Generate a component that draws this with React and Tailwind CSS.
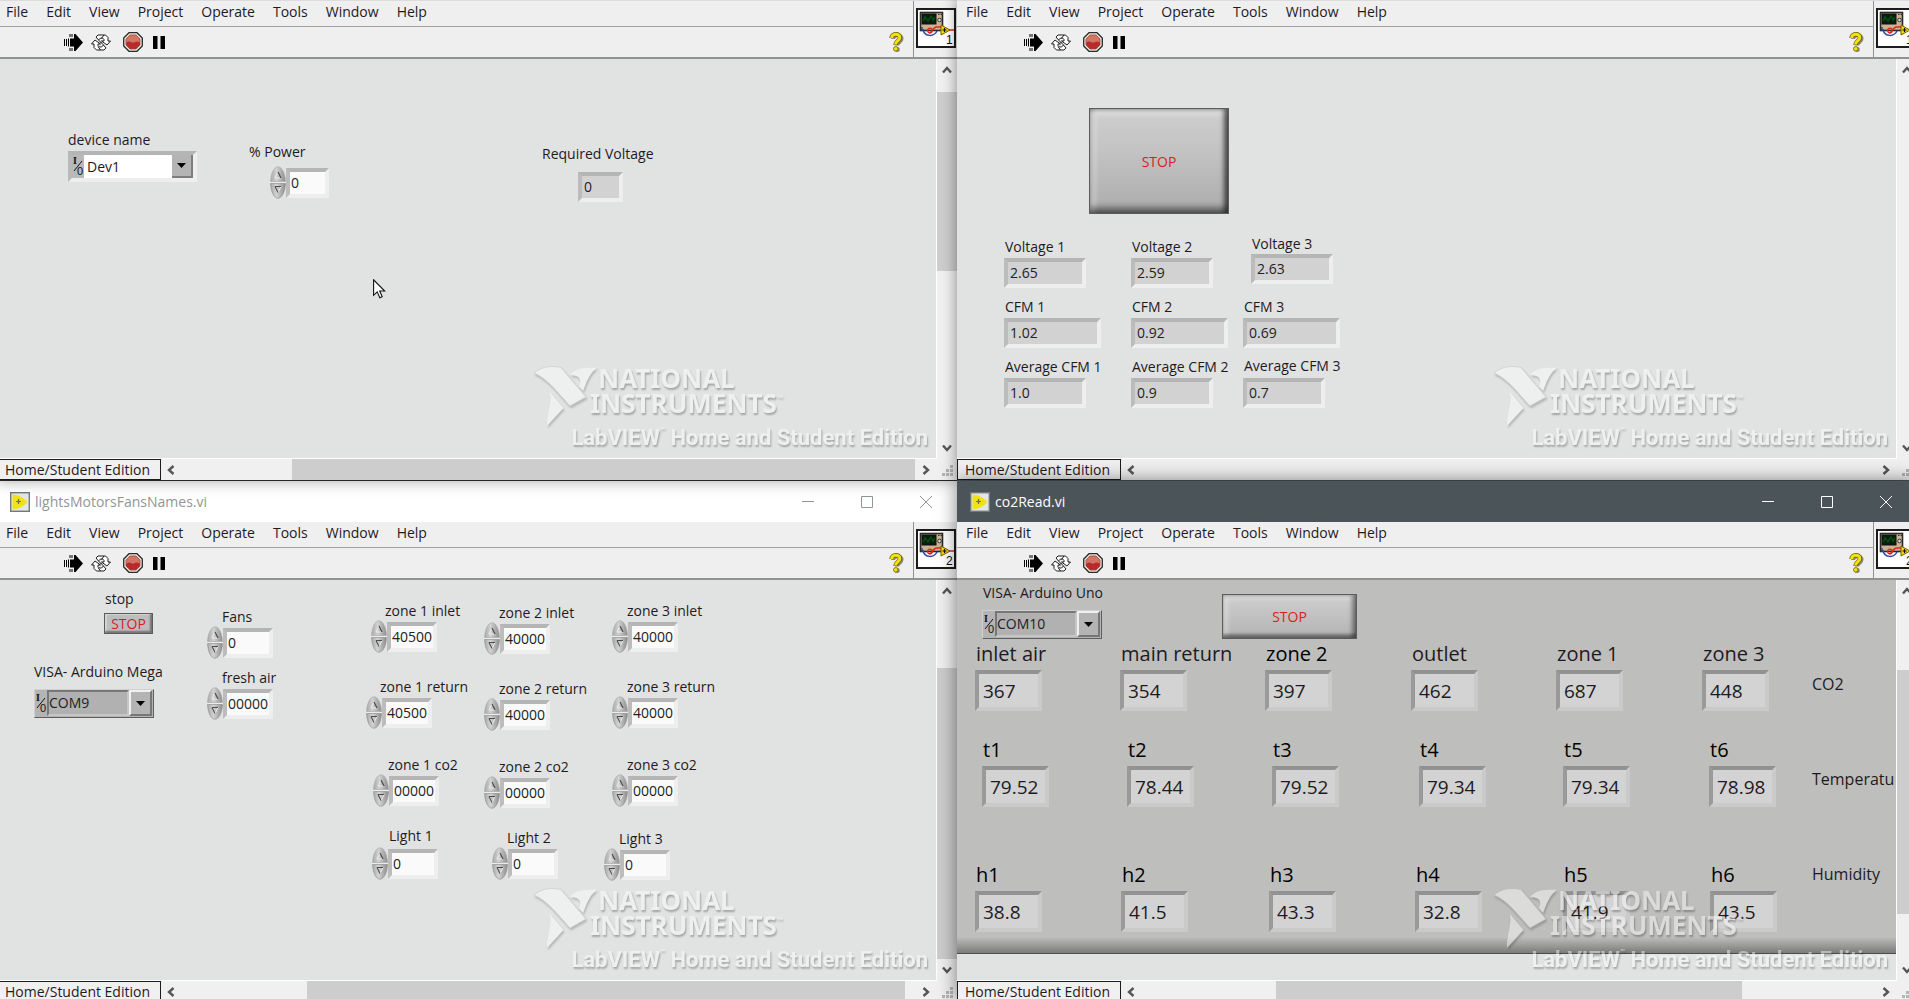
import { useId } from "react";

const MENUS = ["File", "Edit", "View", "Project", "Operate", "Tools", "Window", "Help"];

function RunIcon() {
  return (
    <svg width="19" height="17" viewBox="0 0 19 17" fill="#000">
      <path d="M0 5h1v7H0zM2 5h1v7H2zM4 4.500h1v8H4zM5.500 0h1v3h-1zM7.500 0h1v3h-1zM5.500 14h1v3h-1zM7.500 14h1v3h-1zM6 4.500h4V0h1.500L19 8.500 11.500 17H10v-4.500H6z" />
    </svg>
  );
}

function LoopIcon() {
  return (
    <svg width="20" height="17" viewBox="0 0 20 17" fill="#fff" stroke="#1c1c1c" strokeLinejoin="round">
      <path d="M5 3 7 1h7.500L17 3.500V7h2.500L16 11 10.500 7H13V5.500L11.500 4H9.500L7.500 6z" />
      <path d="M15 14 13 16H5.500L3 13.500V10H.5L4 6l5.500 4H7v1.500L8.500 13h2l2-2z" />
      <path d="M10.500 4.500 13 1M7 12.500 9.500 16M7.500 6l3 3M9.500 8l3 3" fill="none" />
    </svg>
  );
}

function AbortIcon() {
  return (
    <svg width="20" height="20" viewBox="0 0 20 20">
      <path d="M6 .7h8L19.300 6v8L14 19.300H6L.7 14V6z" fill="#e9e4dc" stroke="#2b2b2b" strokeWidth="1.300" />
      <path d="M7 3h6l4 4v3.500H3V7z" fill="#d27563" />
      <path d="M3 10.500 6 9.500l4 1 4-1 3 1V13l-4 4H7l-4-4z" fill="#b92a2a" />
      <path d="M7 3h6l4 4v6l-4 4H7l-4-4V7z" fill="none" stroke="#a5453c" strokeWidth=".8" />
    </svg>
  );
}

function PauseIcon() {
  return (
    <svg width="12" height="13" viewBox="0 0 12 13" fill="#000">
      <path d="M0 0h4.500v13H0zM7.500 0H12v13H7.500z" />
    </svg>
  );
}

function HelpIcon() {
  return (
    <svg width="15" height="20" viewBox="0 0 15 20" fill="none">
      <path d="M3.500 6.500C3.500 1.500 12 1.500 12 6c0 3.500-4.500 3.500-4.500 7" stroke="#8a8a80" strokeWidth="4" transform="translate(.6 .6)" />
      <circle cx="8.200" cy="17.400" r="2.500" fill="#8a8a80" />
      <path d="M2.500 6C2.500 1 11 1 11 5.500c0 3.500-4.500 3.500-4.500 7.500" stroke="#6b6200" strokeWidth="4.400" />
      <path d="M2.700 6C2.700 1.200 10.800 1.200 10.800 5.500c0 3.300-4.300 3.500-4.300 7" stroke="#f3e10d" strokeWidth="3" />
      <circle cx="6.800" cy="16.800" r="2.300" fill="#f3e10d" stroke="#6b6200" strokeWidth=".8" />
    </svg>
  );
}

function ViIcon({ index }) {
  return (
    <svg width="40" height="40" viewBox="0 0 40 40">
      <rect x="1" y="1" width="38" height="38" fill="#fff" stroke="#1c1c1c" strokeWidth="2" />
      <rect x="4.500" y="4.500" width="22" height="18" fill="#cbb491" stroke="#2a2a2a" strokeWidth="1.600" />
      <rect x="6" y="6" width="14" height="10" fill="#06200a" stroke="#111" />
      <path d="M7 13l2-4 3 4 3-5 2 4 2-3" stroke="#0d4a1c" strokeWidth="1.500" fill="none" />
      <path d="M22 6.500h1.500M24.500 6.500H26" stroke="#333" />
      <circle cx="23.500" cy="12" r="1.800" fill="#ddd" stroke="#333" />
      <path d="M6 19v3h2" stroke="#27408f" fill="none" strokeWidth="1.400" />
      <path d="M7 22c2 7 11 7 14 1" stroke="#2b4ba8" fill="none" strokeWidth="1.500" />
      <path d="M13 25c4 0 3-5 7-6h5" stroke="#e32619" fill="none" strokeWidth="1.500" />
      <circle cx="14" cy="22.500" r="2.300" fill="none" stroke="#e32619" strokeWidth="1.300" />
      <path d="M33 22h5" stroke="#e32619" strokeWidth="1.500" />
      <path d="M25 17v10l9-5z" fill="#f5d90f" stroke="#7a5c00" />
      <path d="M26.500 22h4M28.500 20v4" stroke="#111" strokeWidth="1.200" />
      <text x="30" y="36" fontSize="12" fontFamily="Liberation Sans, sans-serif" fill="#111">{index}</text>
    </svg>
  );
}

function FileIcon() {
  return (
    <svg width="20" height="20" viewBox="0 0 20 20">
      <rect x=".7" y=".7" width="18.600" height="18.600" fill="#e4e6e6" stroke="#6f7a80" strokeWidth="1.400" />
      <path d="M2.500 2.500C9 3 14 6 17.500 10 14 14 9 17 2.500 17.500z" fill="#f0e216" />
      <path d="M6 9.500h5M8.500 7v5" stroke="#6f6a4a" strokeWidth="1.200" />
    </svg>
  );
}

function Chevron({ d }) {
  return (
    <svg width="10" height="10" viewBox="0 0 10 10" fill="none" stroke="#555" strokeWidth="2.400">
      <path d={d} />
    </svg>
  );
}

const UP = "M1 7.500l4-4.500 4 4.500";
const DOWN = "M1 2.500l4 4.500 4-4.500";
const LEFT = "M7.500 1L3 5l4.500 4";
const RIGHT = "M2.500 1L7 5 2.500 9";

function Grip() {
  return (
    <svg width="11" height="11" viewBox="0 0 11 11" fill="#b5b5b5">
      <path d="M8 0h3v3H8zM4 4h3v3H4zM8 4h3v3H8zM0 8h3v3H0zM4 8h3v3H4zM8 8h3v3H8z" />
    </svg>
  );
}

function Watermark() {
  return (
    <div className="pointer-events-none absolute right-2 bottom-1.5 flex w-[394px] flex-col text-white opacity-45 select-none">
      <div className="flex">
        <svg width="66" height="64" viewBox="0 0 66 64" className="shrink-0 drop-shadow-[1px_2px_1px_rgba(0,0,0,0.45)]">
          <g fill="#fff">
            <path d="M36 9C43 1 51 2 63 1.500 54 9 52 18 49 25l-4-5C48 14 46 9 36 9z" />
            <path d="M16 26 29.500 42 13 60C12 49 18 39 16 26z" />
            <path d="M0 7C8 0 18-.5 27 1.500L52 31 36 40C24 27 14 13 0 7z" stroke="#b4b4b4" strokeWidth=".8" />
          </g>
        </svg>
        <div className="-ml-2.5 flex flex-col font-['Noto_Sans'] text-[26px] leading-[25px] font-bold [text-shadow:1px_2px_2px_rgba(0,0,0,0.6)]">
          <span className="pl-2">NATIONAL</span>
          <span>INSTRUMENTS<sup className="relative -top-3 align-baseline text-[8px] leading-none">™</sup></span>
        </div>
      </div>
      <div className="-mt-1.5 flex justify-end font-['Roboto'] text-[22px] leading-[28px] font-bold whitespace-nowrap [text-shadow:1px_2px_2px_rgba(0,0,0,0.6)]">
        <span>LabVIEW<sup className="relative -top-3 align-baseline text-[8px] leading-none">™</sup> Home and Student Edition</span>
      </div>
    </div>
  );
}

function TitleBar({ name, active }) {
  return (
    <header className={active ? "flex h-[41px] shrink-0 items-center bg-[#4b5459] pl-[13px] text-white" : "flex h-[41px] shrink-0 items-center bg-white pl-[13px] text-[#8f9696]"}>
      <FileIcon />
      <h1 className="ml-[5px] flex-1 text-[14px] leading-5">{name}</h1>
      <div className="mr-0.5 flex">
        <button aria-label="Minimize" className="flex h-10 w-[59px] items-center justify-center">
          <svg width="12" height="12" viewBox="0 0 12 12" stroke="currentColor"><path d="M0 5.500h12" /></svg>
        </button>
        <button aria-label="Maximize" className="flex h-10 w-[59px] items-center justify-center">
          <svg width="12" height="12" viewBox="0 0 12 12" stroke="currentColor" fill="none"><path d="M.5.5h11v11H.5z" /></svg>
        </button>
        <button aria-label="Close" className="flex h-10 w-[59px] items-center justify-center">
          <svg width="12" height="12" viewBox="0 0 12 12" stroke="currentColor" fill="none"><path d="M0 0l12 12M12 0L0 12" /></svg>
        </button>
      </div>
    </header>
  );
}

function Bars({ index }) {
  return (
    <div className="flex shrink-0 border-b-2 border-[#919191] bg-[#efefef]">
      <div className="flex min-w-0 flex-1 flex-col">
        <nav className="flex h-[26px] items-center gap-[18px] border-b border-[#a3a3a3] pb-[3px] pl-[9px]">
          {MENUS.map((m) => (
            <button key={m} className="leading-5">{m}</button>
          ))}
        </nav>
        <div className="flex h-[30px] items-center pr-[9px] pl-[67px]">
          <button aria-label="Run"><RunIcon /></button>
          <button aria-label="Run continuously" className="ml-2"><LoopIcon /></button>
          <button aria-label="Abort execution" className="ml-3"><AbortIcon /></button>
          <button aria-label="Pause" className="ml-2.5"><PauseIcon /></button>
          <button aria-label="Show context help" className="ml-auto"><HelpIcon /></button>
        </div>
      </div>
      <div className="flex w-11 justify-end border-l border-[#919191] pt-[7px] pr-px">
        <ViIcon index={index} />
      </div>
    </div>
  );
}

function VScroll({ thumb }) {
  return (
    <div className="flex w-5 shrink-0 flex-col items-center bg-[#f0f0f0]">
      <button aria-label="Scroll up" className="flex h-[22px] w-full items-center justify-center"><Chevron d={UP} /></button>
      <div className="w-full flex-1">
        {thumb && <div className={thumb} />}
      </div>
      <button aria-label="Scroll down" className="flex h-[22px] w-full items-center justify-center"><Chevron d={DOWN} /></button>
    </div>
  );
}

function StatusBar({ thumb }) {
  return (
    <footer className="flex h-[21px] shrink-0 bg-[#f0f0f0]">
      <div className="flex w-[164px] items-center border border-[#1c1c1c] pl-[7px] leading-[18px]">Home/Student Edition</div>
      <button aria-label="Scroll left" className="flex w-5 items-center justify-center"><Chevron d={LEFT} /></button>
      <div className="flex-1">
        {thumb && <div className={thumb} />}
      </div>
      <button aria-label="Scroll right" className="flex w-[22px] items-center justify-center"><Chevron d={RIGHT} /></button>
      <div className="flex w-5 items-end justify-center pb-1"><Grip /></div>
    </footer>
  );
}

function ViWindow({ title, active, index, hThumb, vThumb, className, children }) {
  return (
    <section className={className}>
      {title && <TitleBar name={title} active={active} />}
      <Bars index={index} />
      <div className="flex min-h-0 flex-1">
        <main className="relative min-w-0 flex-1 overflow-hidden border-r border-b border-white bg-[#e1e3e2]">
          {children}
          <Watermark />
        </main>
        <VScroll thumb={vThumb} />
      </div>
      <StatusBar thumb={hThumb} />
    </section>
  );
}

function Spinner() {
  const id = useId();
  return (
    <svg width="16" height="33" viewBox="0 0 16 33" className="shrink-0">
      <defs>
        <linearGradient id={id} x1="0" x2="1">
          <stop offset="0" stopColor="#a8a8a8" />
          <stop offset=".4" stopColor="#d2d2d2" />
          <stop offset="1" stopColor="#8d8d8d" />
        </linearGradient>
      </defs>
      <path d="M.5 15.500C1 7 4 .8 8 .8S15 7 15.500 15.500z" fill={`url(#${id})`} stroke="#a8a8a8" strokeWidth=".6" />
      <path d="M.5 17.500C1 26 4 32.200 8 32.200S15 26 15.500 17.500z" fill={`url(#${id})`} stroke="#8a8a8a" strokeWidth=".6" />
      <path d="M0 16.500h16" stroke="#ececec" />
      <path d="M5 12 8 6M5 12h6" fill="none" stroke="#ececec" />
      <path d="M11 12 8 6" stroke="#4c4c4c" strokeWidth="1.300" />
      <path d="M11 20.500 8 26.500" stroke="#ececec" />
      <path d="M5 20.500h6M5 20.500 8 26.500" stroke="#4c4c4c" strokeWidth="1.100" />
    </svg>
  );
}

function Numeric({ label, value, labelAt, at, size = "w-[50px]" }) {
  const id = useId();
  return (
    <>
      <label htmlFor={id} className={`absolute leading-5 whitespace-nowrap ${labelAt}`}>{label}</label>
      <div className={`absolute flex items-center ${at}`}>
        <Spinner />
        <input id={id} defaultValue={value} className={`h-[30px] border-4 border-t-[#b5b5b5] border-r-[#eeeeee] border-b-[#eeeeee] border-l-[#bcbcbc] bg-[#fafafa] pl-px text-[#222] outline-none ${size}`} />
      </div>
    </>
  );
}

function Indicator({ label, value, labelAt, at, size = "w-[82px]" }) {
  const id = useId();
  return (
    <>
      <label htmlFor={id} className={`absolute leading-5 whitespace-nowrap ${labelAt}`}>{label}</label>
      <output id={id} className={`absolute flex h-[30px] items-center border-4 border-t-[#b5b5b5] border-r-[#eeeeee] border-b-[#eeeeee] border-l-[#bcbcbc] bg-[#d2d2d2] pl-0.5 leading-5 text-[#222] ${at} ${size}`}>{value}</output>
    </>
  );
}

function Reading({ label, value, labelAt, at }) {
  const id = useId();
  return (
    <>
      <label htmlFor={id} className={`absolute text-[20px] leading-7 whitespace-nowrap ${labelAt}`}>{label}</label>
      <output id={id} className={`absolute flex h-[41px] w-[67px] items-center border-4 border-t-[#929292] border-r-[#cacaca] border-b-[#cacaca] border-l-[#9a9a9a] bg-[#d3d3d3] pl-1 text-[19px] leading-7 ${at}`}>{value}</output>
    </>
  );
}

function IoGlyph() {
  return (
    <svg width="12" height="22" viewBox="0 0 12 22" className="shrink-0">
      <text x="1" y="9" fontSize="10" fontFamily="Liberation Serif, serif" fontWeight="bold" fill="#111">I</text>
      <path d="M2 16 10 6" stroke="#111" />
      <text x="5" y="20" fontSize="11" fontFamily="Liberation Sans, sans-serif" fill="#111">0</text>
    </svg>
  );
}

function DownTriangle() {
  return (
    <svg width="9" height="5" viewBox="0 0 9 5"><path d="M0 0h9L4.500 5z" fill="#000" /></svg>
  );
}

function ModernRing({ label, value, labelAt, at }) {
  const id = useId();
  return (
    <>
      <label htmlFor={id} className={`absolute leading-5 whitespace-nowrap ${labelAt}`}>{label}</label>
      <div className={`absolute flex h-[31px] w-[129px] border-4 border-t-[#b5b5b5] border-r-[#eeeeee] border-b-[#eeeeee] border-l-[#b9b9b9] bg-[#b9b9b9] ${at}`}>
        <IoGlyph />
        <select id={id} className="min-w-0 flex-1 appearance-none bg-white pl-[3px] leading-5 outline-none">
          <option>{value}</option>
        </select>
        <span className="flex w-[21px] items-center justify-center border-r-2 border-b-2 border-[#7d7d7d] bg-[#b4b4b4]"><DownTriangle /></span>
      </div>
    </>
  );
}

function ClassicRing({ label, value, labelAt, at }) {
  const id = useId();
  return (
    <>
      <label htmlFor={id} className={`absolute leading-5 whitespace-nowrap ${labelAt}`}>{label}</label>
      <div className={`absolute flex h-[29px] w-[120px] border border-t-[#d0d0d0] border-r-[#5e5e5e] border-b-[#5e5e5e] border-l-[#d0d0d0] bg-[#b4b4b4] pr-px pb-px ${at}`}>
        <span className="flex items-center"><IoGlyph /></span>
        <select id={id} className="min-w-0 flex-1 appearance-none border-2 border-t-[#777] border-r-[#c6c6c6] border-b-[#c6c6c6] border-l-[#777] bg-[#b1b1b1] leading-5 text-[#222] outline-none">
          <option>{value}</option>
        </select>
        <span className="flex w-[23px] items-center justify-center border-2 border-t-[#f0f0f0] border-r-[#777] border-b-[#777] border-l-[#f0f0f0] bg-[#b4b4b4]"><DownTriangle /></span>
      </div>
    </>
  );
}

function Pointer() {
  return (
    <svg width="13" height="20" viewBox="0 0 13 20" className="absolute top-[220px] left-[376px]">
      <path d="M.6.800v15.500l3.600-3.400 2.600 5.900 2.400-1L6.700 12h5z" fill="#fff" stroke="#111" strokeWidth="1.100" />
    </svg>
  );
}

export default function App() {
  return (
    <div className="h-screen w-full overflow-hidden bg-[#efefef] font-['Open_Sans','Noto_Sans',sans-serif] text-[14px] text-[#1f1a1f]">
      <div className="-mr-2 -ml-[3px] grid h-[calc(100%+3px)] grid-cols-2 grid-rows-[481fr_521fr]">
        <ViWindow
          index={1}
          className="relative z-10 flex min-h-0 min-w-0 flex-col border-t border-b border-t-[#dcdcdc] border-b-[#2c2528] bg-[#efefef] shadow-[0_0_14px_rgba(0,0,0,0.35)]"
          vThumb="mt-[11px] h-[179px] bg-[#cdcdcd]"
          hThumb="ml-[111px] h-full bg-[#cdcdcd]"
        >
          <ModernRing label="device name" value="Dev1" labelAt="left-[71px] top-[71px]" at="left-[71px] top-[92px]" />
          <Numeric label="% Power" value="0" labelAt="left-[252px] top-[83px]" at="left-[273px] top-[107px]" size="w-[43px]" />
          <Indicator label="Required Voltage" value="0" labelAt="left-[545px] top-[85px]" at="left-[581px] top-[113px]" size="w-[45px]" />
          <Pointer />
        </ViWindow>

        <ViWindow
          index={1}
          className="relative z-20 flex min-h-0 min-w-0 flex-col border-t border-b border-t-[#dcdcdc] border-b-[#4b5459] bg-[#efefef] shadow-[0_0_14px_rgba(0,0,0,0.45)]"
        >
          <button className="absolute top-[49px] left-[132px] h-[106px] w-[140px] border border-[#5c5c5c] bg-linear-to-b from-[#cfcfcf] via-[#c3c3c3] via-40% to-[#acacac] text-[#e01a1a] shadow-[inset_-4px_0_5px_rgba(0,0,0,0.55),inset_0_-6px_6px_rgba(0,0,0,0.4),inset_6px_6px_4px_rgba(255,255,255,0.35)]">STOP</button>
          <Indicator label="Voltage 1" value="2.65" labelAt="left-[48px] top-[178px]" at="left-[47px] top-[199px]" />
          <Indicator label="Voltage 2" value="2.59" labelAt="left-[175px] top-[178px]" at="left-[174px] top-[199px]" />
          <Indicator label="Voltage 3" value="2.63" labelAt="left-[295px] top-[175px]" at="left-[294px] top-[195px]" />
          <Indicator label="CFM 1" value="1.02" labelAt="left-[48px] top-[238px]" at="left-[47px] top-[259px]" size="w-[97px]" />
          <Indicator label="CFM 2" value="0.92" labelAt="left-[175px] top-[238px]" at="left-[174px] top-[259px]" size="w-[97px]" />
          <Indicator label="CFM 3" value="0.69" labelAt="left-[287px] top-[238px]" at="left-[286px] top-[259px]" size="w-[97px]" />
          <Indicator label="Average CFM 1" value="1.0" labelAt="left-[48px] top-[298px]" at="left-[47px] top-[319px]" />
          <Indicator label="Average CFM 2" value="0.9" labelAt="left-[175px] top-[298px]" at="left-[174px] top-[319px]" />
          <Indicator label="Average CFM 3" value="0.7" labelAt="left-[287px] top-[297px]" at="left-[286px] top-[319px]" />
        </ViWindow>

        <ViWindow
          title="lightsMotorsFansNames.vi"
          index={2}
          className="relative flex min-h-0 min-w-0 flex-col bg-[#efefef]"
          vThumb="mt-[66px] h-[291px] bg-[#cdcdcd]"
          hThumb="mr-[10px] ml-[126px] h-full bg-[#cdcdcd]"
        >
          <label htmlFor="stop-fans" className="absolute top-[9px] left-[108px] leading-5">stop</label>
          <button id="stop-fans" className="absolute top-[33px] left-[107px] h-[21px] w-[49px] border border-[#5c5c5c] bg-[#bdbdbd] leading-[18px] text-[#e01a1a] shadow-[inset_-2px_-2px_2px_rgba(0,0,0,0.4),inset_2px_1px_1px_rgba(255,255,255,0.35)]">STOP</button>
          <ClassicRing label="VISA- Arduino Mega" value="COM9" labelAt="left-[37px] top-[82px]" at="left-[37px] top-[109px]" />
          <Numeric label="Fans" value="0" labelAt="left-[225px] top-[27px]" at="left-[210px] top-[46px]" />
          <Numeric label="fresh air" value="00000" labelAt="left-[225px] top-[88px]" at="left-[210px] top-[107px]" />
          <Numeric label="zone 1 inlet" value="40500" labelAt="left-[388px] top-[21px]" at="left-[374px] top-[40px]" />
          <Numeric label="zone 2 inlet" value="40000" labelAt="left-[502px] top-[23px]" at="left-[487px] top-[42px]" />
          <Numeric label="zone 3 inlet" value="40000" labelAt="left-[630px] top-[21px]" at="left-[615px] top-[40px]" />
          <Numeric label="zone 1 return" value="40500" labelAt="left-[383px] top-[97px]" at="left-[369px] top-[116px]" />
          <Numeric label="zone 2 return" value="40000" labelAt="left-[502px] top-[99px]" at="left-[487px] top-[118px]" />
          <Numeric label="zone 3 return" value="40000" labelAt="left-[630px] top-[97px]" at="left-[615px] top-[116px]" />
          <Numeric label="zone 1 co2" value="00000" labelAt="left-[391px] top-[175px]" at="left-[376px] top-[194px]" />
          <Numeric label="zone 2 co2" value="00000" labelAt="left-[502px] top-[177px]" at="left-[487px] top-[196px]" />
          <Numeric label="zone 3 co2" value="00000" labelAt="left-[630px] top-[175px]" at="left-[615px] top-[194px]" />
          <Numeric label="Light 1" value="0" labelAt="left-[392px] top-[246px]" at="left-[375px] top-[267px]" />
          <Numeric label="Light 2" value="0" labelAt="left-[510px] top-[248px]" at="left-[495px] top-[267px]" />
          <Numeric label="Light 3" value="0" labelAt="left-[622px] top-[249px]" at="left-[607px] top-[268px]" />
        </ViWindow>

        <ViWindow
          title="co2Read.vi"
          active
          index={2}
          className="relative z-30 flex min-h-0 min-w-0 flex-col bg-[#efefef] shadow-[0_0_18px_rgba(0,0,0,0.5)]"
          vThumb="mt-[68px] h-[244px] bg-[#cdcdcd]"
          hThumb="mr-[133px] ml-[135px] h-full bg-[#cdcdcd]"
        >
          <div className="flex h-[374px] flex-col justify-end border-b border-[#4c4c4c] bg-[#bebebc]">
            <div className="h-4 bg-linear-to-b from-[#bebebc] to-[#7c7c7c]" />
          </div>
          <ClassicRing label="VISA- Arduino Uno" value="COM10" labelAt="left-[26px] top-[3px]" at="left-[25px] top-[30px]" />
          <button className="absolute top-[14px] left-[265px] h-[45px] w-[135px] border border-[#5c5c5c] bg-linear-to-b from-[#cfcfcf] to-[#b3b3b3] text-[#e01a1a] shadow-[inset_-4px_0_4px_rgba(0,0,0,0.4),inset_0_-4px_3px_rgba(0,0,0,0.35),inset_5px_4px_4px_rgba(255,255,255,0.3)]">STOP</button>
          <Reading label="inlet air" value="367" labelAt="left-[19px] top-[60px]" at="left-[18px] top-[90px]" />
          <Reading label="main return" value="354" labelAt="left-[164px] top-[60px]" at="left-[163px] top-[90px]" />
          <Reading label="zone 2" value="397" labelAt="left-[309px] top-[60px] text-black" at="left-[308px] top-[90px]" />
          <Reading label="outlet" value="462" labelAt="left-[455px] top-[60px]" at="left-[454px] top-[90px]" />
          <Reading label="zone 1" value="687" labelAt="left-[600px] top-[60px]" at="left-[599px] top-[90px]" />
          <Reading label="zone 3" value="448" labelAt="left-[746px] top-[60px]" at="left-[745px] top-[90px]" />
          <Reading label="t1" value="79.52" labelAt="left-[26px] top-[156px] text-black" at="left-[25px] top-[186px]" />
          <Reading label="t2" value="78.44" labelAt="left-[171px] top-[156px] text-black" at="left-[170px] top-[186px]" />
          <Reading label="t3" value="79.52" labelAt="left-[316px] top-[156px] text-black" at="left-[315px] top-[186px]" />
          <Reading label="t4" value="79.34" labelAt="left-[463px] top-[156px] text-black" at="left-[462px] top-[186px]" />
          <Reading label="t5" value="79.34" labelAt="left-[607px] top-[156px] text-black" at="left-[606px] top-[186px]" />
          <Reading label="t6" value="78.98" labelAt="left-[753px] top-[156px] text-black" at="left-[752px] top-[186px]" />
          <Reading label="h1" value="38.8" labelAt="left-[19px] top-[281px] text-black" at="left-[18px] top-[311px]" />
          <Reading label="h2" value="41.5" labelAt="left-[165px] top-[281px] text-black" at="left-[164px] top-[311px]" />
          <Reading label="h3" value="43.3" labelAt="left-[313px] top-[281px] text-black" at="left-[312px] top-[311px]" />
          <Reading label="h4" value="32.8" labelAt="left-[459px] top-[281px] text-black" at="left-[458px] top-[311px]" />
          <Reading label="h5" value="41.9" labelAt="left-[607px] top-[281px] text-black" at="left-[606px] top-[311px]" />
          <Reading label="h6" value="43.5" labelAt="left-[754px] top-[281px] text-black" at="left-[753px] top-[311px]" />
          <span className="absolute top-[92px] left-[855px] text-[16px] leading-6">CO2</span>
          <span className="absolute top-[187px] left-[855px] text-[16px] leading-6">Temperatu</span>
          <span className="absolute top-[282px] left-[855px] text-[16px] leading-6">Humidity</span>
        </ViWindow>
      </div>
    </div>
  );
}
